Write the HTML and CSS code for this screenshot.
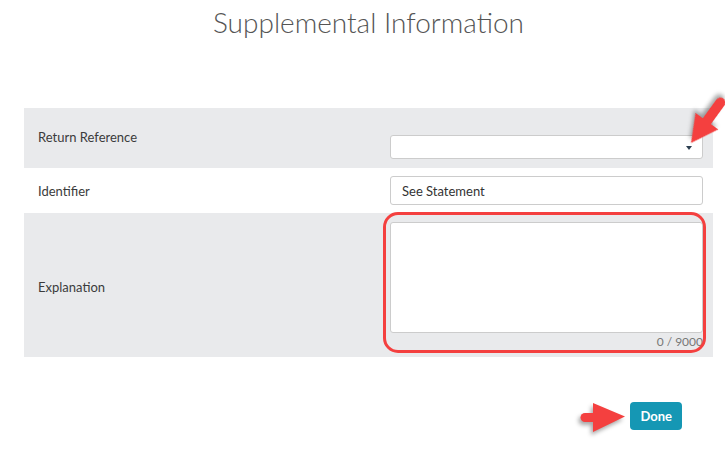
FILE: index.html
```html
<!DOCTYPE html>
<html lang="en">
<head>
    <meta charset="UTF-8">
    <meta name="viewport" content="width=device-width, initial-scale=1.0">
    <title>Supplemental Information</title>
    <link rel="stylesheet" href="styles.css">
</head>
<body>

    <div class="page">
        <h1 class="title">Supplemental Information</h1>

        <!-- Form rows -->
        <div class="form-table">
            <div class="row row-reference">
                <label class="row-label" for="reference">Return Reference</label>
                <div class="select-box" id="reference"></div>
            </div>

            <div class="row row-identifier">
                <label class="row-label" for="identifier">Identifier</label>
                <input type="text" id="identifier" class="text-input" value="See Statement">
            </div>

            <div class="row row-explanation">
                <label class="row-label" for="explanation">Explanation</label>
                <div class="field">
                    <textarea id="explanation" class="text-area"></textarea>
                    <div class="char-count">0 / 9000</div>
                    <div class="highlight"></div>
                </div>
            </div>
        </div>

        <div class="actions">
            <button class="btn-done">Done</button>
        </div>
    </div>

    <!-- Annotation arrows -->
    <svg class="annotations" width="725" height="450" viewBox="0 0 725 450">
        <g class="arrow" transform="translate(691,143) rotate(126)">
            <line x1="-22" y1="0" x2="-50" y2="0" stroke="#f4403f" stroke-width="10" stroke-linecap="round"/>
            <polygon points="0,0 -27,-14 -27,14" fill="#f4403f"/>
        </g>
        <g class="arrow">
            <line x1="585" y1="417.5" x2="597" y2="417.5" stroke="#f4403f" stroke-width="9" stroke-linecap="round"/>
            <polygon points="593,403 625,416.5 593,432" fill="#f4403f"/>
        </g>
    </svg>

</body>
</html>
```

FILE: styles.css
```css
body {
    font-family: Lato, "Open Sans", sans-serif;
    margin: 0;
    padding: 0;
    background-color: #fff;
    color: #333;
}

.page {
    margin: 0 12px 0 24px;
}

.title {
    margin: 0;
    padding-top: 4px;
    font-size: 28px;
    font-weight: 300;
    line-height: 36px;
    text-align: center;
    color: #555;
}

.form-table {
    margin-top: 68px;
}

.row {
    display: grid;
    grid-template-columns: 1fr 313px;
    align-items: center;
    padding: 8px 10px 8px 14px;
}

.row-reference,
.row-explanation {
    background-color: #e9eaec;
}

.row-reference {
    min-height: 42px;
    padding-top: 9px;
    padding-bottom: 9px;
}

.row-label {
    font-size: 13px;
    color: #3b3b3b;
}

.row-reference .row-label {
    align-self: start;
    padding-top: 12px;
}

.select-box {
    align-self: end;
    position: relative;
    height: 22px;
    background-color: #fff;
    border: 1px solid #ccc;
    border-radius: 3px;
}

.select-box::after {
    content: "";
    position: absolute;
    right: 10px;
    top: 10px;
    border-left: 3px solid transparent;
    border-right: 3px solid transparent;
    border-top: 4px solid #2c3e50;
}

.text-input {
    box-sizing: border-box;
    width: 100%;
    height: 29px;
    padding: 0 11px;
    font-family: inherit;
    font-size: 13px;
    color: #333;
    background-color: #fff;
    border: 1px solid #ccc;
    border-radius: 3px;
    outline: none;
}

.row-explanation {
    padding-top: 9px;
    padding-bottom: 6px;
}

.field {
    position: relative;
}

.text-area {
    display: block;
    box-sizing: border-box;
    width: 100%;
    height: 111px;
    margin: 0;
    resize: none;
    background-color: #fff;
    border: 1px solid #ccc;
    border-radius: 3px;
    outline: none;
}

.char-count {
    text-align: right;
    font-size: 12px;
    line-height: 18px;
    color: #777;
}

/* red box drawn around the explanation field */
.highlight {
    position: absolute;
    top: -10px;
    left: -7px;
    right: -3px;
    bottom: -2px;
    border: 3px solid #f4403f;
    border-radius: 15px;
}

.actions {
    display: flex;
    justify-content: flex-end;
    padding: 45px 31px 0 0;
}

.btn-done {
    height: 28px;
    padding: 0 10px;
    font-family: inherit;
    font-size: 13px;
    font-weight: bold;
    color: #fff;
    background-color: #1597b4;
    border: none;
    border-radius: 4px;
    cursor: pointer;
}

.annotations {
    position: absolute;
    top: 0;
    left: 0;
    pointer-events: none;
}

.arrow {
    filter: drop-shadow(-2px 3px 2px rgba(0, 0, 0, 0.35));
}
```
